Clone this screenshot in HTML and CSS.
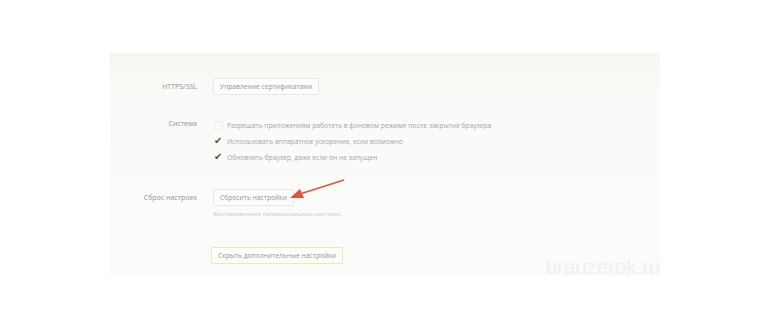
FILE: index.html
```html
<html lang="ru">
<head>
    <meta charset="UTF-8">
    <title>Настройки</title>
    <link rel="stylesheet" href="styles.css">
</head>
<body>
    <div class="panel">
        <div class="row row-https">
            <div class="label">HTTPS/SSL</div>
            <div class="value">
                <button class="btn">Управление сертификатами</button>
            </div>
        </div>
        <div class="row row-system">
            <div class="label">Система</div>
            <div class="value">
                <div class="check"><span class="box"></span>Разрешать приложениям работать в фоновом режиме после закрытия браузера</div>
                <div class="check"><span class="box on">&#10004;</span>Использовать аппаратное ускорение, если возможно</div>
                <div class="check"><span class="box on">&#10004;</span>Обновлять браузер, даже если он не запущен</div>
            </div>
        </div>
        <div class="row row-reset">
            <div class="label">Сброс настроек</div>
            <div class="value">
                <button class="btn">Сбросить настройки</button>
                <div class="hint">Восстановление первоначальных настроек.</div>
                <svg class="arrow" width="58" height="22" viewBox="0 0 58 22">
                    <line x1="56" y1="1" x2="12" y2="15" stroke="#e0543a" stroke-width="1.6"/>
                    <polygon points="2,19 12,10 16,19" fill="#e0543a"/>
                </svg>
            </div>
        </div>
        <div class="row row-hide">
            <div class="label"></div>
            <div class="value">
                <button class="btn btn-yellow">Скрыть дополнительные настройки</button>
            </div>
        </div>
        <div class="watermark">brauzerok.ru</div>
    </div>
</body>
</html>
```

FILE: styles.css
```css
body {
    margin: 0;
    background: #ffffff;
    font-family: "Open Sans", "Liberation Sans", sans-serif;
}

.panel {
    position: relative;
    margin: 53px 0 0 110px;
    width: 550px;
    height: 223px;
    box-sizing: border-box;
    padding-top: 25px;
    background: linear-gradient(#f6f6f1, #fafaf8 40px, #fbfbfa);
}

.row {
    display: flex;
    align-items: flex-start;
}

.label {
    width: 87px;
    text-align: right;
    font-size: 7px;
    color: #929292;
    padding-right: 16px;
    flex-shrink: 0;
}

.value {
    position: relative;
    display: flex;
    flex-direction: column;
    align-items: flex-start;
}

.btn {
    font-family: inherit;
    font-size: 6.7px;
    color: #959595;
    background: #fdfdfd;
    border: 1px solid #e8e8e6;
    border-radius: 1px;
    padding: 0 6px;
    height: 17px;
    line-height: 15px;
}

.btn-yellow {
    border-color: #f3e9a9;
    background: #fefefb;
    margin-left: -2px;
}

.row-https .label {
    line-height: 17px;
}

.row-system {
    margin-top: 23px;
}

.row-system .label {
    line-height: 12px;
}

.check {
    display: flex;
    align-items: center;
    height: 16px;
    font-size: 6.7px;
    color: #a5a5a5;
    white-space: nowrap;
}

.check:first-child {
    margin-top: -1px;
}

.box {
    width: 7px;
    height: 7px;
    border: 1px solid #ecece9;
    background: #fbfbf9;
    margin-right: 4px;
    margin-left: 1px;
    font-size: 9px;
    line-height: 7px;
    color: #56542c;
    display: flex;
    justify-content: center;
}

.box.on {
    border-color: transparent;
    background: transparent;
    margin-left: 0;
    margin-right: 5px;
    font-size: 10px;
    line-height: 4px;
}

.row-reset {
    margin-top: 24px;
}

.row-reset .label {
    line-height: 17px;
}

.hint {
    margin-top: 4px;
    font-size: 6px;
    color: #cbcbc9;
}

.arrow {
    position: absolute;
    left: 75px;
    top: -10px;
}

.row-hide {
    margin-top: 29px;
}

.watermark {
    position: absolute;
    right: 0;
    bottom: -3px;
    font-family: "Liberation Sans", sans-serif;
    font-size: 21px;
    color: #f0f0f0;
    letter-spacing: -0.3px;
}
```
